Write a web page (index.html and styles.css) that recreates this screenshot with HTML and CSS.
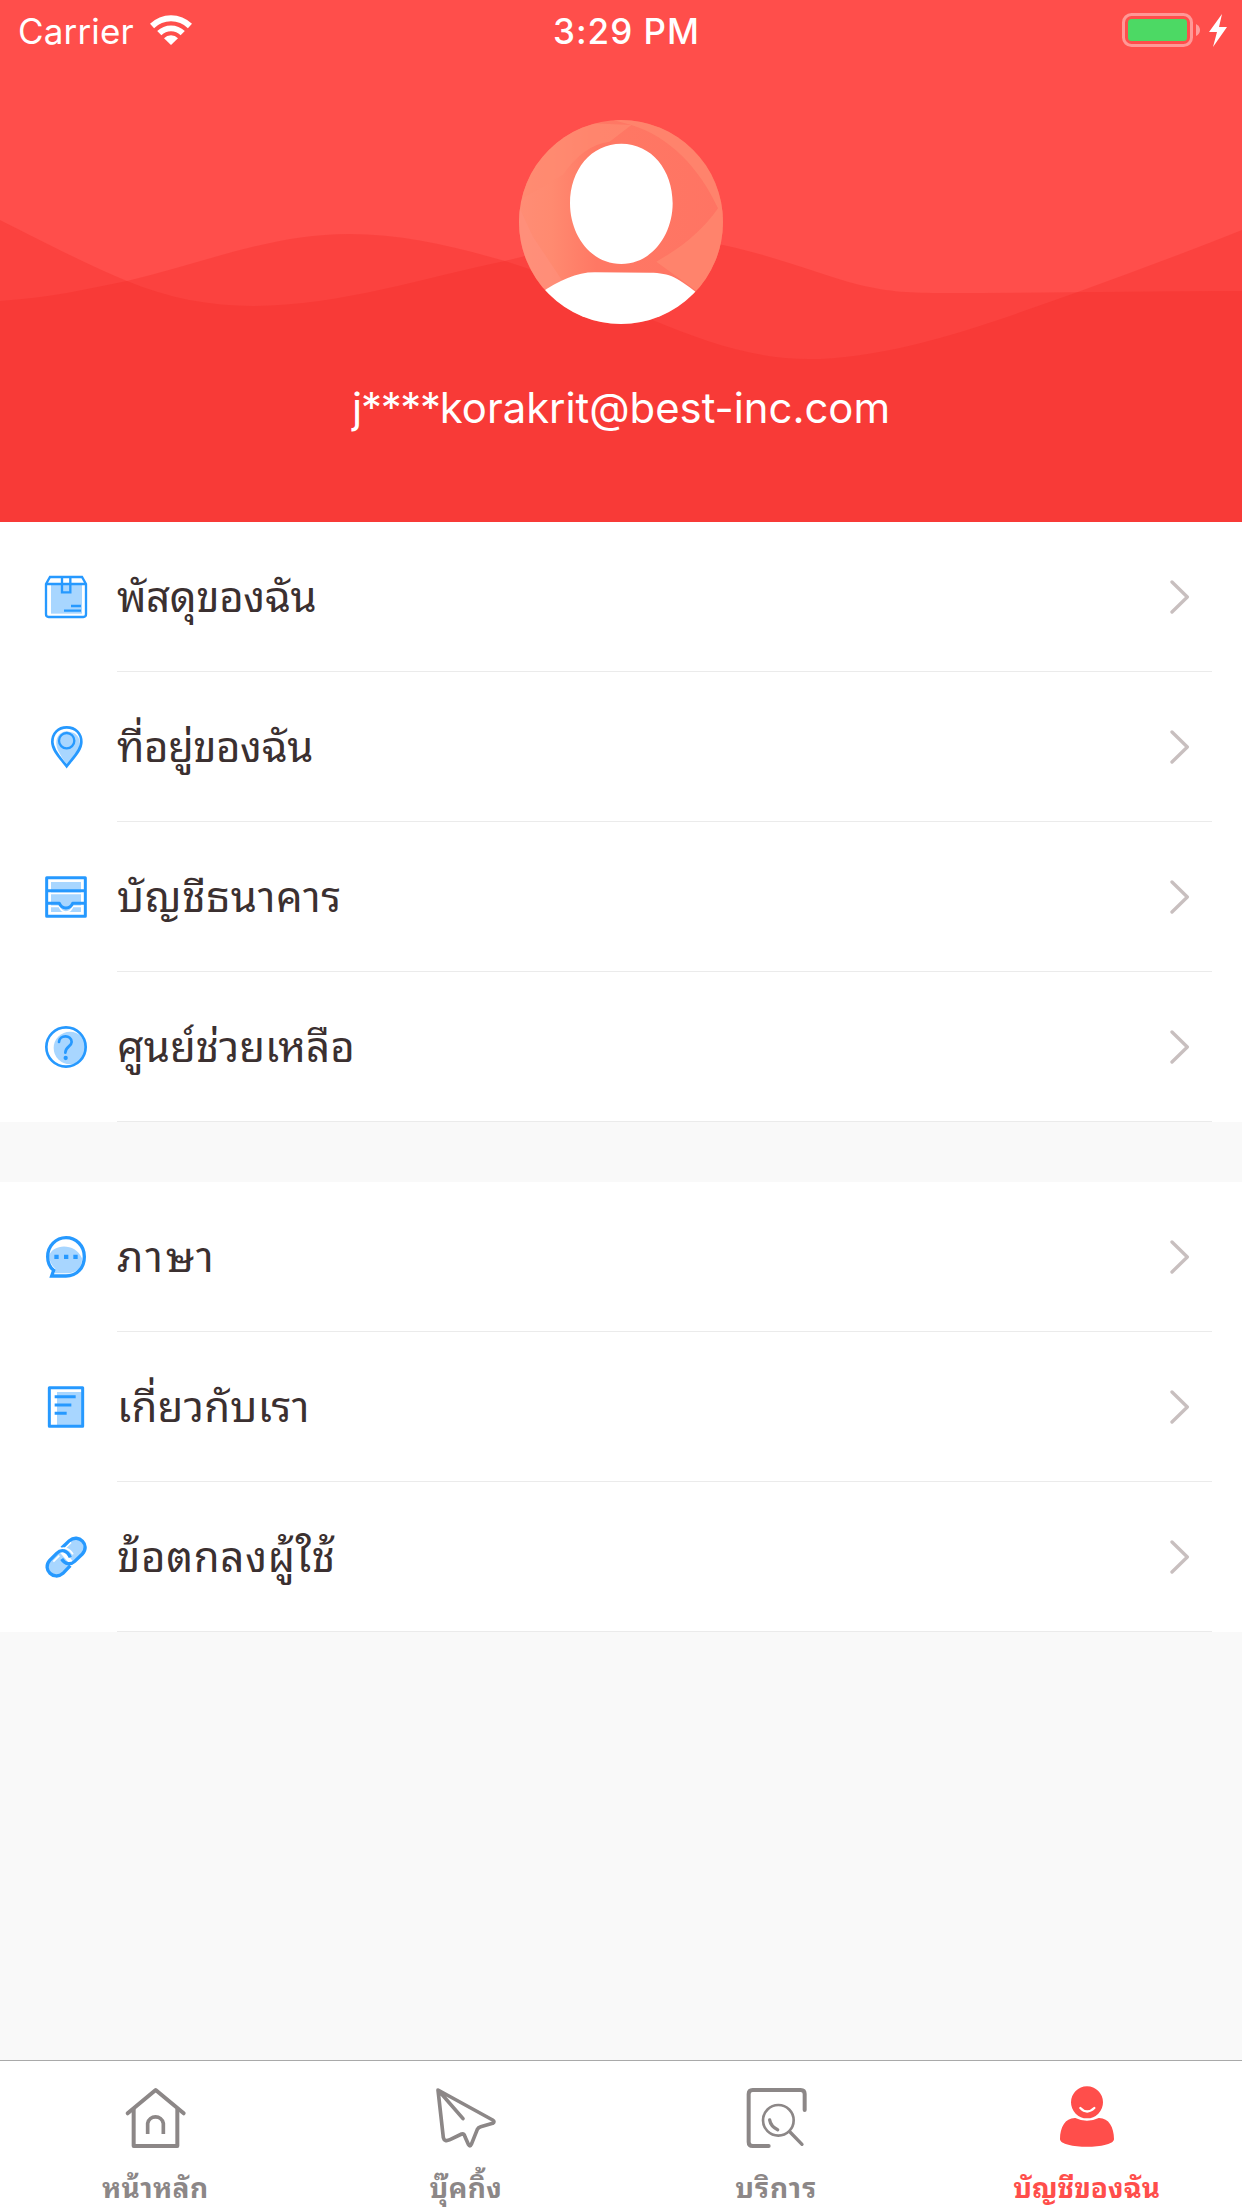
FILE: index.html
```html
<!DOCTYPE html>
<html lang="th">
<head>
<meta charset="utf-8">
<title>บัญชีของฉัน</title>
<link rel="stylesheet" href="styles.css">
</head>
<body>
<div class="screen">
  <header class="profile">
    <svg class="waves" viewBox="0 0 1242 522" aria-hidden="true">
      <path d="M0 220C50 245 90 266 127 281C168 298 210 306 253 306C340 306 430 276 505 261C560 248 600 236 640 236C730 236 800 269 860 285C890 292 910 293 945 293C1040 293 1140 291 1242 291V522H0Z"/>
      <path d="M0 301C48 298 88 289 127 281C200 264 270 234 349 234C405 234 455 247 505 261C560 278 605 300 650 319C705 342 755 359 808 359C890 359 980 327 1075 293C1135 271 1190 251 1242 230V522H0Z"/>
    </svg>
    <div class="status">
      <div class="status-left">
        <span class="carrier">Carrier</span>
        <svg class="wifi" viewBox="0 0 42 30"><path d="M0 8.8A30 30 0 0 1 42 8.8L37.9 13.2A24 24 0 0 0 4.1 13.2Z"/><path d="M7.2 16A20 20 0 0 1 34.8 16L30.6 20.2A13.6 13.6 0 0 0 11.4 20.2Z"/><path d="M14 23.2A10 10 0 0 1 28 23.2L21 30Z"/></svg>
      </div>
      <span class="clock">3:29 PM</span>
      <svg class="battery" viewBox="0 0 108 36"><rect x="1.5" y="1.5" width="68" height="31" rx="8" fill="none" stroke="#fff" stroke-opacity=".42" stroke-width="3"/><rect x="6" y="6" width="59" height="22" rx="3.5" fill="#4cd964"/><path d="M74 11Q78 13 78 17T74 23Z" fill="#fff" opacity=".45"/><path d="M100 1L87 19H95L91 34L105 14H97Z" fill="#fff"/></svg>
    </div>
    <svg class="avatar" viewBox="58 60 612 612">
      <defs>
        <clipPath id="face"><circle cx="364" cy="366" r="306"/></clipPath>
        <linearGradient id="skin" x1="0" x2="1"><stop offset="0" stop-color="#ff8d75"/><stop offset=".16" stop-color="#ff8a70"/><stop offset=".38" stop-color="#ff7864"/><stop offset="1" stop-color="#ff7463"/></linearGradient>
      </defs>
      <g clip-path="url(#face)">
        <path fill="url(#skin)" d="M58 60H670V672H58Z"/>
        <path fill="#ff8a71" d="M395 75L330 125Q250 135 190 225L58 300V60Z" opacity=".7"/>
        <path fill="#ff886f" d="M340 60L395 75C510 110 600 205 655 325C610 390 550 440 470 485L600 580H670V60Z" opacity=".75"/>
        <path fill="#ff927f" d="M58 320L100 410L200 560L58 600Z" opacity=".5"/>
        <path fill="#fff" d="M365 131C456 131 519 210 519 310C519 405 456 492 365 492C273 492 211 405 211 310C211 210 274 131 365 131ZM120 581C180 541 230 517 285 517L450 518C515 519 530 531 610 592V680H120Z"/>
      </g>
    </svg>
    <div class="email"><span class="masked">j****</span>korakrit@best-inc.com</div>
  </header>

  <main class="content">
    <ul class="menu">
      <li class="item">
        <svg class="icon" viewBox="0 0 126 126"><path class="tint" d="M18 25H111V113H18Z"/><path d="M15 3H111L123 24V115Q123 123 115 123H11Q3 123 3 115V24ZM3 24H123M51 3V49H76V3M78 90H108M57 104H108"/></svg>
        <div class="row"><span class="label parcels">พัสดุของฉัน</span><svg class="chevron" viewBox="0 0 60 102"><path d="M6 6L52 51L6 96"/></svg></div>
      </li>
      <li class="item">
        <svg class="icon" viewBox="0 0 126 126"><path class="tint" d="M40 75C22 40 47 10 72 17C93 19 107 33 104 59C97 82 78 99 66 116Q52 99 40 75Z"/><path stroke-width="8" d="M65 4C91 4 109 22 109 48C109 74 81 99 65 121C49 99 22 74 22 48C22 22 40 4 65 4Z"/><circle cx="65" cy="44" r="23" stroke-width="7"/></svg>
        <div class="row"><span class="label addresses">ที่อยู่ของฉัน</span><svg class="chevron" viewBox="0 0 60 102"><path d="M6 6L52 51L6 96"/></svg></div>
      </li>
      <li class="item">
        <svg class="icon" viewBox="0 0 126 126"><path class="tint" d="M18 18H108V108H18Z"/><path class="gap" d="M12 52H114M12 91H43Q48 108 63 108T83 91H114"/><path stroke-width="9" stroke-linejoin="round" d="M5 5H121V121H5ZM5 44H121M5 82H43Q48 96 63 96T83 82H121"/></svg>
        <div class="row"><span class="label bank">บัญชีธนาคาร</span><svg class="chevron" viewBox="0 0 60 102"><path d="M6 6L52 51L6 96"/></svg></div>
      </li>
      <li class="item">
        <svg class="icon" viewBox="0 0 126 126"><circle class="tint" cx="75" cy="66" r="49"/><circle stroke-width="8" cx="63" cy="63" r="59"/><path stroke-width="8" stroke-linecap="round" d="M42 48C43 26 80 25 80 48C80 61 61 62 61 80"/><circle class="dot" cx="62" cy="96" r="6.5"/></svg>
        <div class="row"><span class="label help">ศูนย์ช่วยเหลือ</span><svg class="chevron" viewBox="0 0 60 102"><path d="M6 6L52 51L6 96"/></svg></div>
      </li>
    </ul>
    <ul class="menu">
      <li class="item">
        <svg class="icon" viewBox="0 0 126 126"><path class="tint" d="M12 60C22 23 91 18 111 67C111 100 91 112 63 112H29L31 98Q14 84 12 60Z"/><path stroke-width="10" d="M20 120H63C96 120 118 95 118 62C118 29 93 5 63 5C33 5 8 30 8 62C8 80 15 94 26 103Z"/><path class="dot" d="M28 56H41V69H28ZM57 56H70V69H57ZM85 56H98V69H85Z"/></svg>
        <div class="row"><span class="label language">ภาษา</span><svg class="chevron" viewBox="0 0 60 102"><path d="M6 6L52 51L6 96"/></svg></div>
      </li>
      <li class="item">
        <svg class="icon" viewBox="0 0 126 126"><path class="tint" d="M36 18H110V117H36Z"/><path stroke-width="9" stroke-linejoin="round" d="M13 5H113V121H13ZM29 32H92M29 57H79M29 82H65"/></svg>
        <div class="row"><span class="label about">เกี่ยวกับเรา</span><svg class="chevron" viewBox="0 0 60 102"><path d="M6 6L52 51L6 96"/></svg></div>
      </li>
      <li class="item">
        <svg class="icon" viewBox="0 0 126 126"><path class="tint" d="M51 34L72 14Q92 1 110 16Q126 35 109 54L85 78ZM44 49L15 77Q2 94 17 111Q34 124 51 110L76 86Z"/><path class="gap" d="M61 36L78 19M25 77L43 59"/><path stroke-width="10" d="M50 36L73 14C101 -9 137 27 112 54L89 76C77 87 60 85 50 69"/><path class="gap" d="M40 41C57 31 74 38 84 55"/><path stroke-width="10" d="M76 64C66 42 49 38 35 52L14 73C-10 100 27 136 54 112L76 89"/></svg>
        <div class="row"><span class="label terms">ข้อตกลงผู้ใช้</span><svg class="chevron" viewBox="0 0 60 102"><path d="M6 6L52 51L6 96"/></svg></div>
      </li>
    </ul>
  </main>

  <nav class="tabs">
    <a class="tab">
      <svg class="tab-icon" viewBox="-2 0 180 180"><path stroke-width="12" stroke-linecap="round" stroke-linejoin="round" d="M6 76L90 6L174 76"/><path stroke-width="12" stroke-linejoin="round" d="M24 63V174H155V63"/><path stroke-width="11" d="M66 138V106A24 24 0 0 1 113 106V138"/></svg>
      <span class="tab-label home">หน้าหลัก</span>
    </a>
    <a class="tab">
      <svg class="tab-icon" viewBox="0 0 180 180"><path stroke-width="11" stroke-linecap="round" stroke-linejoin="round" d="M6 6L170 96Q178 101 170 106L134 116Q127 118 124 124L106 169Q102 178 97 169L87 146Q84 136 77 138L42 155Q25 163 22 149ZM9 9L81 92"/></svg>
      <span class="tab-label booking">บุ๊คกิ้ง</span>
    </a>
    <a class="tab">
      <svg class="tab-icon" viewBox="-2 0 180 180"><path stroke-width="12" stroke-linecap="round" d="M174 66V18Q174 6 162 6H18Q6 6 6 18V162Q6 174 18 174H66"/><circle cx="95" cy="97" r="46" stroke-width="8"/><path stroke-width="10" stroke-linecap="round" d="M69 96Q72 115 93 125M130 132L166 169"/></svg>
      <span class="tab-label service">บริการ</span>
    </a>
    <a class="tab active">
      <svg class="tab-icon" viewBox="0 0 180 180"><path class="solid" d="M90 -5A48 48 0 0 1 90 91A48 48 0 0 1 90 -5ZM55 90Q90 107 125 90C155 89 171 118 171 153C171 184 9 184 9 153C9 118 25 89 55 90Z"/><path class="smile" d="M70 60Q90 81 112 60"/></svg>
      <span class="tab-label account">บัญชีของฉัน</span>
    </a>
  </nav>
</div>
</body>
</html>
```
FILE: styles.css
```css
* { box-sizing: border-box; }
body { margin: 0; background: #f9f9f9; font-family: Inter, "Noto Sans Thai Looped", "Noto Sans Thai", "Noto Sans", sans-serif; }
svg { display: block; flex: none; }
.screen { width: 1242px; height: 2208px; display: flex; flex-direction: column; overflow: hidden; }

.profile { position: relative; height: 522px; flex: none; display: flex; flex-direction: column; align-items: center; background: #ff4e4b; color: #fff; }
.waves { position: absolute; left: 0; top: 0; width: 1242px; height: 522px; }
.waves path { fill: #f32824; fill-opacity: .3; }
.status, .avatar, .email { position: relative; }
.status { width: 100%; height: 61px; padding: 1px 12px 0 18px; display: grid; grid-template-columns: 1fr auto 1fr; align-items: center; font-size: 35px; line-height: 60px; }
.status-left { display: flex; align-items: center; gap: 16px; }
.carrier { letter-spacing: .15px; }
.wifi { width: 42px; height: 30px; margin-bottom: 2px; fill: #fff; }
.clock { font-weight: 500; letter-spacing: 1px; padding-left: 5px; }
.battery { width: 108px; height: 36px; justify-self: end; }
.avatar { width: 204px; height: 204px; margin-top: 59px; }
.email { margin-top: 58px; font-size: 41.8px; line-height: 52px; white-space: nowrap; }
.masked { letter-spacing: -1.2px; }

.content { flex: 1; display: flex; flex-direction: column; gap: 60px; }
.menu { margin: 0; padding: 0; list-style: none; background: #fff; }
.item { height: 150px; padding: 0 30px 0 45px; display: flex; align-items: center; gap: 30px; }
.icon { width: 42px; height: 42px; overflow: visible; fill: none; stroke: #2699ff; stroke-width: 7; }
.icon .tint { fill: #a8d6ff; stroke: none; }
.icon .dot { fill: #2699ff; stroke: none; }
.icon .gap { stroke: #fff; stroke-width: 5; }
.row { flex: 1; height: 150px; padding-right: 22px; border-bottom: 1px solid #ebebeb; display: flex; align-items: center; justify-content: space-between; }
.label { color: #3b3030; font-size: 42px; line-height: 60px; font-weight: 430; white-space: nowrap; }
.parcels { letter-spacing: -.4px; }
.addresses { letter-spacing: -.5px; }
.bank { letter-spacing: .7px; }
.language { letter-spacing: 2.5px; }
.about { letter-spacing: .3px; }
.terms { letter-spacing: .7px; }
.chevron { width: 20px; height: 34px; fill: none; stroke: #c8bfbf; stroke-width: 10; stroke-linecap: round; stroke-linejoin: round; }

.tabs { height: 148px; flex: none; display: flex; background: #fff; border-top: 1px solid #a9a9a9; color: #8c8787; }
.tab { flex: 1; display: flex; flex-direction: column; align-items: center; padding-top: 27px; }
.tab-icon { width: 60px; height: 60px; overflow: visible; fill: none; stroke: currentColor; }
.tab-icon .solid { fill: currentColor; stroke: none; }
.tab-icon .smile { stroke: #fff; stroke-width: 7; stroke-linecap: round; }
.tab-label { margin-top: 20px; font-size: 28px; line-height: 40px; font-weight: 700; white-space: nowrap; }
.home { letter-spacing: .4px; }
.booking { letter-spacing: .3px; }
.service { letter-spacing: 1px; }
.active { color: #ff4e4b; }
```
